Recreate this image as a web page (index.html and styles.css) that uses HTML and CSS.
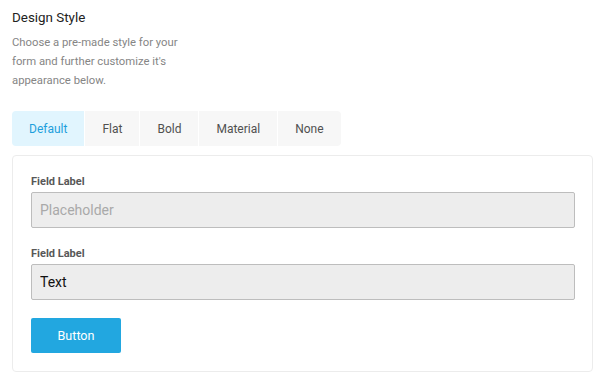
FILE: index.html
```html
<!DOCTYPE html>
<html lang="en">
<head>
    <meta charset="UTF-8">
    <meta name="viewport" content="width=device-width, initial-scale=1.0">
    <title>Design Style</title>
    <link rel="stylesheet" href="styles.css">
</head>
<body>
<main class="design-style">
    <h2>Design Style</h2>
    <p class="intro">Choose a pre-made style for your<br>form and further customize it's<br>appearance below.</p>

    <div class="tabs">
        <button type="button" class="tab active">Default</button>
        <button type="button" class="tab">Flat</button>
        <button type="button" class="tab">Bold</button>
        <button type="button" class="tab">Material</button>
        <button type="button" class="tab">None</button>
    </div>

    <form class="preview">
        <div class="field">
            <label for="field1">Field Label</label>
            <input type="text" id="field1" placeholder="Placeholder">
        </div>
        <div class="field">
            <label for="field2">Field Label</label>
            <input type="text" id="field2" value="Text">
        </div>
        <button type="button" class="btn">Button</button>
    </form>
</main>
</body>
</html>
```

FILE: styles.css
```css
:root {
    --blue: #22a7e0;
    --tab: #f7f7f7;
    --tab-active: #e1f5fe;
    --border: #ececec;
    --input: #ededed;
}
body {
    margin: 0;
    background: #fff;
    font-family: Roboto, 'Liberation Sans', Arial, sans-serif;
}
.design-style {
    padding: 8px 7px 0 12px;
}
h2 {
    margin: 0;
    font-size: 13.4px;
    font-weight: 400;
    line-height: 20px;
    color: #222;
}
.intro {
    margin: 5px 0 0 0;
    font-size: 11.3px;
    line-height: 19px;
    color: #858585;
}
.tabs {
    display: flex;
    gap: 1px;
    margin-top: 21px;
}
.tab {
    height: 35px;
    padding: 0 17px;
    border: none;
    background: var(--tab);
    font-family: inherit;
    font-size: 12px;
    color: #505050;
    cursor: pointer;
}
.tab:first-child {
    border-radius: 4px 0 0 4px;
}
.tab:last-child {
    border-radius: 0 4px 4px 0;
}
.tab.active {
    background: var(--tab-active);
    color: #1e9fdc;
}
.preview {
    margin-top: 9px;
    border: 1px solid var(--border);
    border-radius: 4px;
    padding: 18px 17px 18px 18px;
}
.field {
    margin-bottom: 18px;
}
label {
    display: block;
    font-size: 11px;
    font-weight: 700;
    line-height: 16px;
    color: #585858;
    margin-bottom: 2px;
}
input[type="text"] {
    display: block;
    width: 100%;
    height: 36px;
    box-sizing: border-box;
    padding: 0 8px;
    border: 1px solid #bdbdbd;
    border-radius: 2px;
    background: var(--input);
    font-family: inherit;
    font-size: 14px;
    color: #111;
    outline: none;
}
input::placeholder {
    color: #a9a9a9;
}
.btn {
    display: block;
    width: 90px;
    height: 35px;
    border: none;
    border-radius: 2px;
    background: var(--blue);
    color: #fff;
    font-family: inherit;
    font-size: 12.6px;
    cursor: pointer;
}
```
